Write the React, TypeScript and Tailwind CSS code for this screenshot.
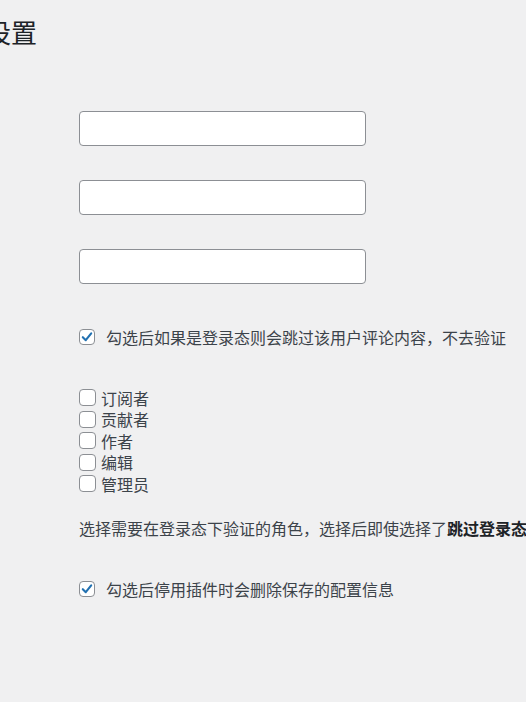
import React from 'react'

function Box({ checked, big }: { checked?: boolean; big?: boolean }) {
  return (
    <span
      className={
        big
          ? 'flex h-[17px] w-[17px] shrink-0 items-center justify-center rounded-[4px] border border-[#8c8f94] bg-white'
          : 'flex h-[16px] w-[16px] shrink-0 items-center justify-center rounded-[4px] border border-[#8c8f94] bg-white'
      }
    >
      {checked && (
        <svg width="14" height="14" viewBox="0 0 16 16" fill="none">
          <path d="M3.2 8.2 L6.6 11.6 L12.8 3.8" stroke="#2271b1" strokeWidth="2.4" strokeLinecap="round" strokeLinejoin="round" />
        </svg>
      )}
    </span>
  )
}

const roles = ['订阅者', '贡献者', '作者', '编辑', '管理员']

export default function App() {
  return (
    <div className="min-h-screen overflow-hidden bg-[#f0f0f1] text-[16px] text-[#3c434a] font-['Microsoft_YaHei','Noto_Sans_CJK_SC',sans-serif]">
      <h1 className="-ml-[15px] mt-[15px] h-[34px] text-[26px] leading-[34px] font-normal text-[#1d2327]">设置</h1>

      <div className="flex flex-col pl-[79px]">
        <input className="mt-[62px] h-[35px] w-[287px] rounded-[4px] border border-[#8c8f94] bg-white px-2" />
        <input className="mt-[34px] h-[35px] w-[287px] rounded-[4px] border border-[#8c8f94] bg-white px-2" />
        <input className="mt-[34px] h-[35px] w-[287px] rounded-[4px] border border-[#8c8f94] bg-white px-2" />

        <label className="mt-[41px] flex h-[24px] items-center gap-[11px] whitespace-nowrap">
          <Box checked />
          <span>勾选后如果是登录态则会跳过该用户评论内容，不去验证</span>
        </label>

        <div className="mt-[38px] flex flex-col">
          {roles.map((r) => (
            <label key={r} className="flex h-[21.5px] items-center gap-[5px]">
              <Box big />
              <span className="leading-[20px]">{r}</span>
            </label>
          ))}
        </div>

        <p className="mt-[21px] h-[24px] whitespace-nowrap leading-[24px]">
          选择需要在登录态下验证的角色，选择后即使选择了<b className="font-bold text-[#1d2327]">跳过登录态验证</b>，也会对这些角色进行验证
        </p>

        <label className="mt-[37px] flex h-[24px] items-center gap-[11px] whitespace-nowrap">
          <Box checked />
          <span>勾选后停用插件时会删除保存的配置信息</span>
        </label>
      </div>
    </div>
  )
}
